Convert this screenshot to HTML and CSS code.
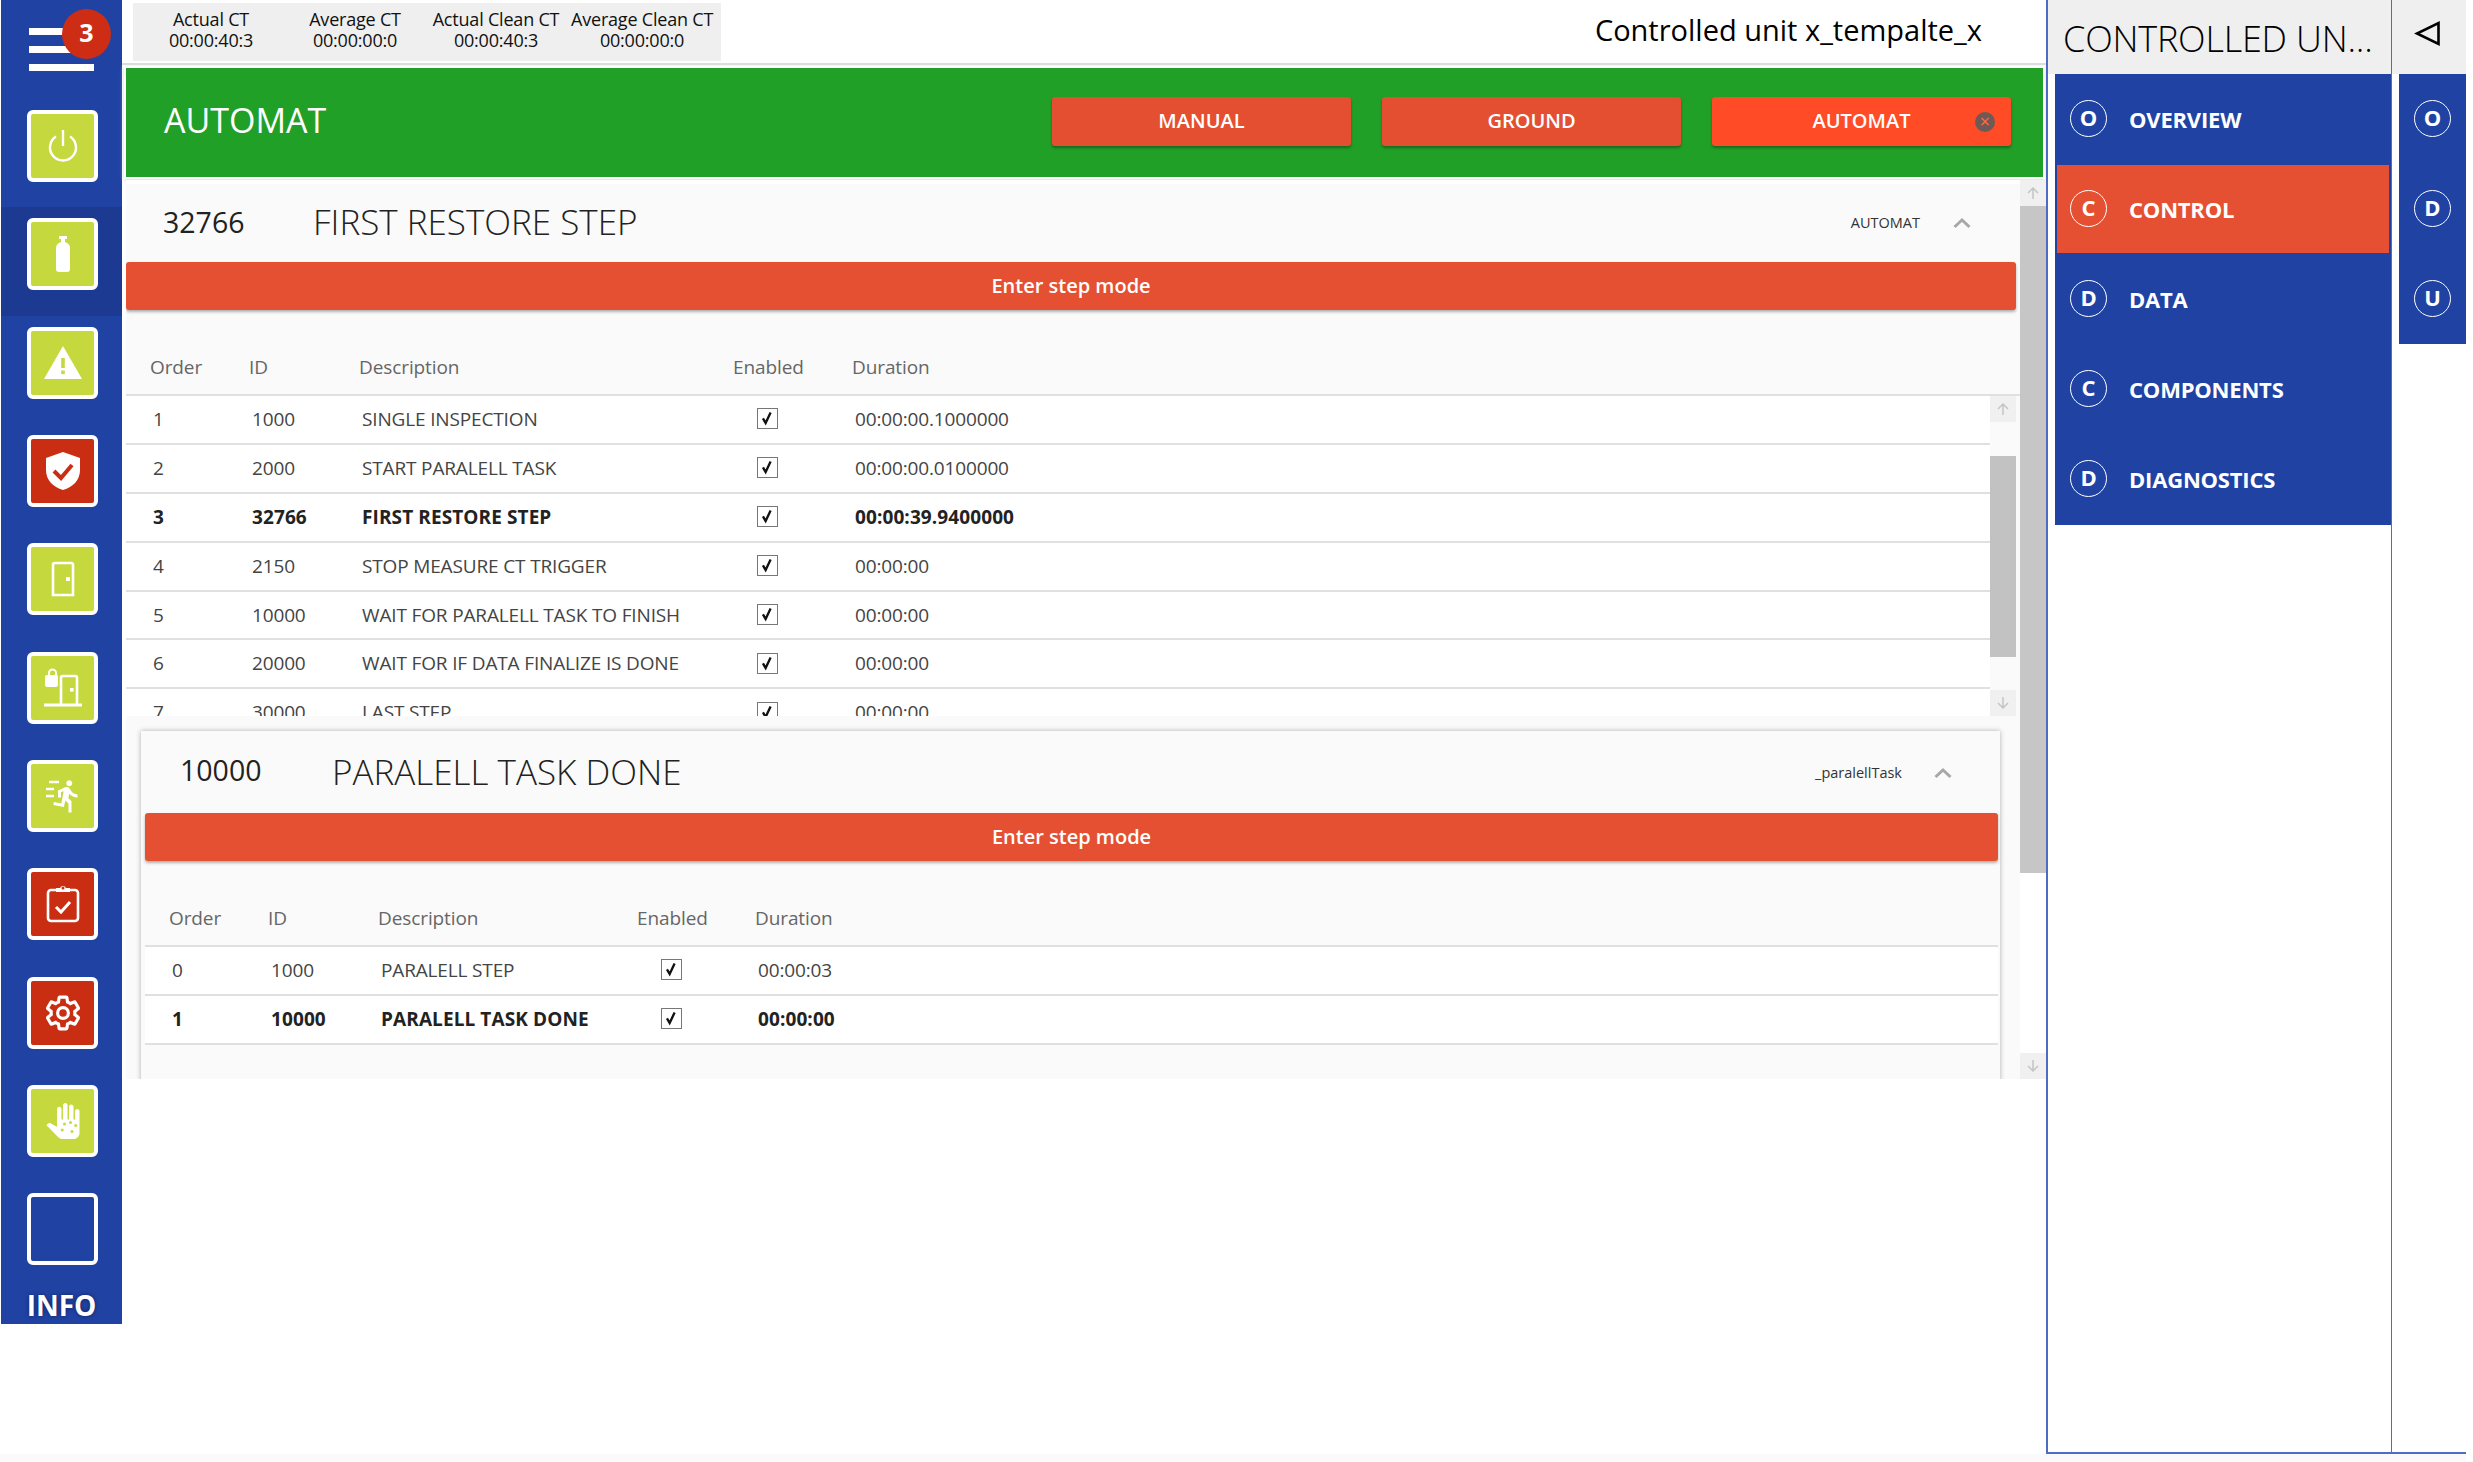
FILE: index.html
```html
<!DOCTYPE html>
<html>
	<head>
		<title>Controlled unit</title>
		<link rel="stylesheet" href="styles.css">
	</head>
	<body>
		<svg class="defs" width="0" height="0">
			<symbol id="check" viewBox="0 0 20 20"><path d="M5.5 10.5 L8.5 15.5 L14 4" fill="none" stroke="#111" stroke-width="2.6"/></symbol>
			<symbol id="chev" viewBox="0 0 18 12"><path d="M1.5 10 L9 3 L16.5 10" fill="none" stroke="#a8a8a8" stroke-width="3"/></symbol>
			<symbol id="up" viewBox="0 0 14 14"><path d="M7 13 V2 M2 7 L7 2 L12 7" fill="none" stroke="#c4c4c4" stroke-width="1.5"/></symbol>
			<symbol id="down" viewBox="0 0 14 14"><path d="M7 1 V12 M2 7 L7 12 L12 7" fill="none" stroke="#c4c4c4" stroke-width="1.5"/></symbol>
		</svg>
		<div class="page">
			<div class="side">
				<div class="side-top">
					<div class="burger"><i></i><i></i><i></i></div>
					<div class="badge">3</div>
				</div>
				<div class="side-row">
					<div class="tile lime">
						<svg viewBox="0 0 40 40" width="40" height="40"><path d="M13 10.5 A13 13 0 1 0 27 10.5" fill="none" stroke="#fff" stroke-width="2.4"/><path d="M20 4 V20" stroke="#fff" stroke-width="2.4"/></svg>
					</div>
				</div>
				<div class="side-row active">
					<div class="tile lime">
						<svg viewBox="0 0 40 40" width="40" height="40"><path d="M16 2 H24 V5 H22 V8 C25 9 27 11 27 14 V35 C27 37 26 38 24 38 H16 C14 38 13 37 13 35 V14 C13 11 15 9 18 8 V5 H16 Z" fill="#fff"/></svg>
					</div>
				</div>
				<div class="side-row">
					<div class="tile lime">
						<svg viewBox="0 0 40 40" width="40" height="40"><path d="M20 3 L39 36 H1 Z" fill="#fff"/><rect x="18.2" y="15" width="3.6" height="10" fill="#c5d93f"/><rect x="18.2" y="27.5" width="3.6" height="3.6" fill="#c5d93f"/></svg>
					</div>
				</div>
				<div class="side-row">
					<div class="tile red">
						<svg viewBox="0 0 40 40" width="40" height="40"><path d="M20 1 L37 7 V19 C37 29 30 36 20 39 C10 36 3 29 3 19 V7 Z" fill="#fff"/><path d="M11 20 L18 27 L29 14" fill="none" stroke="#ca2e12" stroke-width="4"/></svg>
					</div>
				</div>
				<div class="side-row">
					<div class="tile lime">
						<svg viewBox="0 0 40 40" width="40" height="40"><path d="M10 36 V6 Q10 4 12 4 H28 Q30 4 30 6 V36 Z" fill="none" stroke="#fff" stroke-width="2.6"/><rect x="23" y="18" width="4" height="4" fill="#fff"/></svg>
					</div>
				</div>
				<div class="side-row">
					<div class="tile lime">
						<svg viewBox="0 0 40 40" width="40" height="40"><path d="M1 37 H39" stroke="#fff" stroke-width="3"/><path d="M18 36 V10 Q18 8 20 8 H32 Q34 8 34 10 V36" fill="none" stroke="#fff" stroke-width="2.6"/><rect x="27" y="20" width="3.6" height="3.6" fill="#fff"/><path d="M2 9 Q2 7 4 7 H5 V5 A4.5 4.5 0 0 1 14 5 V7 H15 Q14 7 14 7 Q15 7 15 9 V17 Q15 19 13 19 H4 Q2 19 2 17 Z" fill="#fff"/><path d="M7 7 V5 A2.5 2.5 0 0 1 12 5 V7 Z" fill="#c5d93f"/></svg>
					</div>
				</div>
				<div class="side-row">
					<div class="tile lime">
						<svg viewBox="0 0 40 40" width="40" height="40">
							<g transform="translate(6 2) scale(1.5)"><path d="M13.49 5.48c1.1 0 2-.9 2-2s-.9-2-2-2-2 .9-2 2 .9 2 2 2zm-3.6 13.9l1-4.4 2.1 2v6h2v-7.5l-2.1-2 .6-3c1.3 1.5 3.3 2.5 5.5 2.5v-2c-1.9 0-3.5-1-4.3-2.4l-1-1.6c-.4-.6-1-1-1.7-1-.3 0-.5.1-.8.1l-5.2 2.2v4.7h2v-3.4l1.8-.7-1.6 8.1-4.9-1-.4 2 7 1.4z" fill="#fff"/></g>
							<path d="M6 6 H16 M3 13 H11 M3 20 H11" stroke="#fff" stroke-width="2.4"/>
						</svg>
					</div>
				</div>
				<div class="side-row">
					<div class="tile red">
						<svg viewBox="0 0 40 40" width="40" height="40"><rect x="5" y="6" width="30" height="31" rx="3" fill="none" stroke="#fff" stroke-width="2.6"/><path d="M13 8 V4 H17 A3.2 3.2 0 0 1 23 4 H27 V8 Z" fill="#fff"/><circle cx="20" cy="4" r="1.5" fill="#ca2e12"/><path d="M13 23 L18 28 L27 18" fill="none" stroke="#fff" stroke-width="3"/></svg>
					</div>
				</div>
				<div class="side-row">
					<div class="tile red">
						<svg viewBox="0 0 24 24" width="38" height="38"><path d="M19.43 12.98c.04-.32.07-.64.07-.98s-.03-.66-.07-.98l2.11-1.65c.19-.15.24-.42.12-.64l-2-3.46c-.12-.22-.39-.3-.61-.22l-2.49 1c-.52-.4-1.08-.73-1.69-.98l-.38-2.65C14.46 2.18 14.25 2 14 2h-4c-.25 0-.46.18-.49.42l-.38 2.65c-.61.25-1.17.59-1.69.98l-2.49-1c-.23-.09-.49 0-.61.22l-2 3.46c-.13.22-.07.49.12.64l2.11 1.65c-.04.32-.07.65-.07.98s.03.66.07.98l-2.11 1.65c-.19.15-.24.42-.12.64l2 3.46c.12.22.39.3.61.22l2.49-1c.52.4 1.08.73 1.69.98l.38 2.65c.03.24.24.42.49.42h4c.25 0 .46-.18.49-.42l.38-2.65c.61-.25 1.17-.59 1.69-.98l2.49 1c.23.09.49 0 .61-.22l2-3.46c.12-.22.07-.49-.12-.64l-2.11-1.65z" fill="none" stroke="#fff" stroke-width="2"/><circle cx="12" cy="12" r="3.4" fill="none" stroke="#fff" stroke-width="2"/></svg>
					</div>
				</div>
				<div class="side-row">
					<div class="tile lime">
						<svg viewBox="0 0 24 24" width="36" height="36"><path d="M23 5.5V20c0 2.2-1.8 4-4 4h-7.3c-1.08 0-2.1-.43-2.85-1.19L1 14.83s1.26-1.23 1.3-1.25c.22-.19.49-.29.79-.29.22 0 .42.06.6.16.04.01 4.31 2.46 4.31 2.46V4c0-.83.67-1.5 1.5-1.5S11 3.17 11 4v7h1V1.5c0-.83.67-1.5 1.5-1.5S15 .67 15 1.5V11h1V2.5c0-.83.67-1.5 1.5-1.5s1.5.67 1.5 1.5V11h1V5.5c0-.83.67-1.5 1.5-1.5s1.5.67 1.5 1.5z" fill="#fff"/><g fill="#c5d93f"><circle cx="13" cy="14" r="1"/><circle cx="17" cy="13" r="1"/><circle cx="20.5" cy="15" r="1"/><circle cx="11.5" cy="18" r="1"/><circle cx="18" cy="19" r="1"/></g></svg>
					</div>
				</div>
				<div class="side-row">
					<div class="tile"></div>
				</div>
				<div class="side-info">INFO</div>
			</div>

			<div class="main">
				<div class="head">
					<div class="stats">
						<div class="stat"><div>Actual CT</div><div>00:00:40:3</div></div>
						<div class="stat"><div>Average CT</div><div>00:00:00:0</div></div>
						<div class="stat"><div>Actual Clean CT</div><div>00:00:40:3</div></div>
						<div class="stat"><div>Average Clean CT</div><div>00:00:00:0</div></div>
					</div>
					<div class="unit">Controlled unit x_tempalte_x</div>
				</div>

				<div class="mode">
					<div class="mode-name">AUTOMAT</div>
					<div class="mode-btns">
						<div class="btn">MANUAL</div>
						<div class="btn">GROUND</div>
						<div class="btn on">AUTOMAT<span class="close">×</span></div>
					</div>
				</div>

				<div class="scroll">
					<div class="content">
						<div class="card-head">
							<div class="num">32766</div>
							<div class="title">FIRST RESTORE STEP</div>
							<div class="tag">AUTOMAT</div>
							<svg class="chev"><use href="#chev"/></svg>
						</div>
						<div class="step-btn">Enter step mode</div>
						<div class="grid-head outer">
							<div>Order</div><div>ID</div><div>Description</div><div>Enabled</div><div>Duration</div>
						</div>
						<div class="rows-wrap">
							<div class="rows">
								<div class="row outer"><div>1</div><div>1000</div><div>SINGLE INSPECTION</div><div><span class="cb"><svg><use href="#check"/></svg></span></div><div>00:00:00.1000000</div></div>
								<div class="row outer"><div>2</div><div>2000</div><div>START PARALELL TASK</div><div><span class="cb"><svg><use href="#check"/></svg></span></div><div>00:00:00.0100000</div></div>
								<div class="row outer cur"><div>3</div><div>32766</div><div>FIRST RESTORE STEP</div><div><span class="cb"><svg><use href="#check"/></svg></span></div><div>00:00:39.9400000</div></div>
								<div class="row outer"><div>4</div><div>2150</div><div>STOP MEASURE CT TRIGGER</div><div><span class="cb"><svg><use href="#check"/></svg></span></div><div>00:00:00</div></div>
								<div class="row outer"><div>5</div><div>10000</div><div>WAIT FOR PARALELL TASK TO FINISH</div><div><span class="cb"><svg><use href="#check"/></svg></span></div><div>00:00:00</div></div>
								<div class="row outer"><div>6</div><div>20000</div><div>WAIT FOR IF DATA FINALIZE IS DONE</div><div><span class="cb"><svg><use href="#check"/></svg></span></div><div>00:00:00</div></div>
								<div class="row outer"><div>7</div><div>30000</div><div>LAST STEP</div><div><span class="cb"><svg><use href="#check"/></svg></span></div><div>00:00:00</div></div>
							</div>
							<div class="bar small">
								<div class="arrow"><svg><use href="#up"/></svg></div>
								<div class="thumb"></div>
								<div class="arrow"><svg><use href="#down"/></svg></div>
							</div>
						</div>

						<div class="sub">
							<div class="card-head">
								<div class="num">10000</div>
								<div class="title">PARALELL TASK DONE</div>
								<div class="tag">_paralellTask</div>
								<svg class="chev"><use href="#chev"/></svg>
							</div>
							<div class="step-btn">Enter step mode</div>
							<div class="grid-head inner">
								<div>Order</div><div>ID</div><div>Description</div><div>Enabled</div><div>Duration</div>
							</div>
							<div class="row inner"><div>0</div><div>1000</div><div>PARALELL STEP</div><div><span class="cb"><svg><use href="#check"/></svg></span></div><div>00:00:03</div></div>
							<div class="row inner cur"><div>1</div><div>10000</div><div>PARALELL TASK DONE</div><div><span class="cb"><svg><use href="#check"/></svg></span></div><div>00:00:00</div></div>
						</div>
					</div>
					<div class="bar big">
						<div class="arrow"><svg><use href="#up"/></svg></div>
						<div class="thumb"></div>
						<div class="arrow"><svg><use href="#down"/></svg></div>
					</div>
				</div>
			</div>

			<div class="panel">
				<div class="panel-title">CONTROLLED UN...</div>
				<div class="nav">
					<div class="nav-item"><span class="ring">O</span>OVERVIEW</div>
					<div class="nav-item on"><span class="ring">C</span>CONTROL</div>
					<div class="nav-item"><span class="ring">D</span>DATA</div>
					<div class="nav-item"><span class="ring">C</span>COMPONENTS</div>
					<div class="nav-item"><span class="ring">D</span>DIAGNOSTICS</div>
				</div>
			</div>
			<div class="mini">
				<div class="mini-top">
					<svg viewBox="0 0 28 28" width="28" height="28"><path d="M24.5 3 V24 L3 13.5 Z" fill="none" stroke="#000" stroke-width="2.6"/></svg>
				</div>
				<div class="mini-nav">
					<div class="mini-item"><span class="ring">O</span></div>
					<div class="mini-item"><span class="ring">D</span></div>
					<div class="mini-item"><span class="ring">U</span></div>
				</div>
			</div>
		</div>
		<div class="strip"></div>
	</body>
</html>
```

FILE: styles.css
```css
*{
	margin:0px;
	padding:0px;
	box-sizing:border-box;
}
html,body{
	overflow:hidden;
}
body{
	height:1462px;
	background-color:#ffffff;
	font-family:"Open Sans","Noto Sans",sans-serif;
	color:#333333;
}
.defs{
	position:absolute;
}
.page{
	display:flex;
	width:2466px;
	height:1454px;
}
.strip{
	width:2466px;
	height:8px;
	background-color:#fafafa;
}

/* left bar */
.side{
	flex:none;
	width:121px;
	height:1324px;
	margin-left:1px;
	background-color:#2043a3;
}
.side-top{
	position:relative;
	height:99px;
}
.burger{
	display:flex;
	flex-direction:column;
	gap:11px;
	width:65px;
	margin-left:28px;
	padding-top:28px;
}
.burger i{
	display:block;
	height:7px;
	background-color:#ffffff;
}
.badge{
	position:absolute;
	left:61px;
	top:9px;
	width:49px;
	height:50px;
	border-radius:50%;
	background-color:#cc2d14;
	color:#ffffff;
	font-size:25px;
	font-weight:700;
	line-height:46px;
	text-align:center;
}
.side-row{
	height:108.33px;
	padding-top:11px;
	padding-left:26px;
}
.side-row.active{
	background-color:#1d3a93;
}
.tile{
	display:flex;
	align-items:center;
	justify-content:center;
	width:71px;
	height:72px;
	border:4px solid #ffffff;
	border-radius:6px;
}
.tile.lime{
	background-color:#c5d93f;
}
.tile.red{
	background-color:#ca2e12;
}
.side-info{
	margin-top:-6px;
	color:#ffffff;
	font-size:28px;
	font-weight:700;
	line-height:40px;
	text-align:center;
	text-shadow:0 0 4px #10205a;
}

/* middle */
.main{
	flex:none;
	width:1924px;
}
.head{
	display:flex;
	justify-content:space-between;
	height:65px;
	padding-left:11px;
	border-bottom:2px solid #dddddd;
}
.stats{
	display:grid;
	grid-template-columns:156px 132px 150px 142px;
	width:588px;
	height:58px;
	margin-top:3px;
	padding-top:6px;
	background-color:#efefef;
	color:#111111;
	font-size:18px;
	letter-spacing:-.2px;
	line-height:21px;
	text-align:center;
	white-space:nowrap;
}
.unit{
	margin-right:64px;
	padding-top:8px;
	color:#000000;
	font-size:29px;
	line-height:44px;
}
.mode{
	display:flex;
	align-items:center;
	justify-content:space-between;
	width:1917px;
	height:109px;
	margin:3px 0px 3px 4px;
	padding:0px 32px 2px 38px;
	background-color:#21a027;
	box-shadow:0 0 0 2px #ffffff,0 1px 4px 2px #d8d8d8;
}
.mode-name{
	margin-bottom:3px;
	color:#ffffff;
	font-size:34px;
}
.mode-btns{
	display:flex;
	gap:31px;
}
.btn{
	position:relative;
	width:299px;
	height:49px;
	border-radius:3px;
	background-color:#e44f32;
	box-shadow:0 2px 3px rgba(0,0,0,.35);
	color:#ffffff;
	font-size:20px;
	font-weight:600;
	line-height:48px;
	text-align:center;
}
.btn.on{
	background-color:#ff4b26;
}
.close{
	position:absolute;
	left:263px;
	top:15px;
	width:20px;
	height:20px;
	border-radius:50%;
	background-color:#6e5a55;
	color:#ff6a4a;
	font-size:18px;
	font-weight:400;
	line-height:19px;
}

/* scroll area */
.scroll{
	display:flex;
	width:1924px;
	height:899px;
	padding-left:4px;
}
.content{
	flex:none;
	width:1894px;
	height:899px;
	overflow:hidden;
	border-top:4px solid #ffffff;
	background-color:#fafafa;
}
.card-head{
	display:flex;
	align-items:center;
	height:78px;
	padding-left:37px;
	padding-bottom:3px;
}
.num{
	width:150px;
	color:#222222;
	font-size:28.5px;
	font-weight:500;
}
.title{
	flex:1;
	color:#222222;
	font-size:35px;
	font-weight:300;
}
.tag{
	margin-top:1px;
	color:#333333;
	font-size:14.5px;
}
.chev{
	width:18px;
	height:12px;
	margin:3px 49px 0px 33px;
}
.step-btn{
	width:1890px;
	height:48px;
	border-radius:3px;
	background-color:#e55032;
	box-shadow:0 2px 3px rgba(0,0,0,.3);
	color:#ffffff;
	font-size:20px;
	font-weight:600;
	line-height:48px;
	text-align:center;
}
.grid-head,.row{
	display:grid;
	align-items:center;
	padding-left:24px;
}
.outer{
	grid-template-columns:99px 110px 374px 119px 1fr;
}
.inner{
	grid-template-columns:99px 110px 259px 118px 1fr;
}
.grid-head{
	height:86px;
	padding-top:29px;
	border-bottom:2px solid #e0e0e0;
	color:#666666;
	font-size:19px;
	letter-spacing:-.1px;
}
.rows-wrap{
	display:flex;
	width:1890px;
	height:320px;
	overflow:hidden;
}
.rows{
	flex:none;
	width:1864px;
}
.row{
	height:48.9px;
	padding-bottom:1px;
	border-bottom:2px solid #e0e0e0;
	background-color:#ffffff;
	color:#444444;
	font-size:19px;
	letter-spacing:-.15px;
}
.row > div{
	padding-left:3px;
}
.row > div:nth-child(4){
	padding-left:24px;
}
.row.cur{
	color:#222222;
	font-weight:700;
	letter-spacing:.1px;
}
.cb{
	display:block;
	width:21px;
	height:21px;
	border:1.5px solid #777777;
	background-color:#ffffff;
}
.cb svg{
	display:block;
	width:18px;
	height:18px;
}
.sub{
	width:1859px;
	height:400px;
	margin:15px 0px 0px 15px;
	background-color:#fafafa;
	box-shadow:0 0 5px rgba(0,0,0,.3);
}
.sub .card-head{
	height:82px;
	padding-left:39px;
	padding-bottom:2px;
}
.sub .num{
	width:152px;
	padding-bottom:3px;
}
.sub .tag{
	margin-top:3px;
}
.sub .chev{
	margin:3px 48px 0px 32px;
}
.sub .step-btn{
	width:1853px;
	margin-left:4px;
}
.sub .grid-head,.sub .row{
	width:1853px;
	margin-left:4px;
}
.sub .grid-head{
	height:86px;
}
.bar{
	display:flex;
	flex-direction:column;
	flex:none;
	width:26px;
}
.bar .arrow{
	display:flex;
	align-items:center;
	justify-content:center;
	flex:none;
	height:26px;
	background-color:#f0f0f0;
}
.arrow svg{
	width:14px;
	height:14px;
}
.bar.small{
	height:320px;
	background-color:#fafafa;
}
.bar.small .thumb{
	height:201px;
	margin:34px 0px 33px 0px;
	background-color:#c2c2c2;
}
.bar.big{
	height:899px;
}
.bar.big .thumb{
	height:667px;
	margin-bottom:180px;
	background-color:#c6c6c6;
}

/* right panels */
.panel{
	flex:none;
	width:346px;
	height:1454px;
	border-left:2px solid #4f6cc4;
	border-right:1px solid #4f6cc4;
	border-bottom:2px solid #4f6cc4;
}
.panel-title{
	height:74px;
	padding-left:15px;
	background-color:#efefef;
	color:#000000;
	font-size:36px;
	font-weight:300;
	letter-spacing:-.2px;
	line-height:77px;
	white-space:nowrap;
}
.nav{
	height:451px;
	margin-left:7px;
	background-color:#2043a3;
}
.nav-item{
	display:flex;
	align-items:center;
	height:90px;
	padding-left:15px;
	padding-bottom:1px;
	color:#ffffff;
	font-size:22px;
	font-weight:700;
	letter-spacing:-.2px;
}
.nav-item.on{
	height:88px;
	margin:1px 2px;
	padding-left:13px;
	background-color:#e55032;
}
.ring{
	display:block;
	flex:none;
	width:37px;
	height:37px;
	margin-right:22px;
	border:1.5px solid #ffffff;
	border-radius:50%;
	color:#ffffff;
	font-size:22px;
	font-weight:700;
	line-height:32px;
	text-align:center;
}
.mini{
	flex:none;
	width:74px;
	height:1454px;
	border-bottom:2px solid #4f6cc4;
}
.mini-top{
	display:flex;
	align-items:center;
	height:74px;
	padding:0px 0px 6px 22px;
	background-color:#efefef;
}
.mini-nav{
	height:270px;
	margin-left:7px;
	background-color:#2043a3;
}
.mini-item{
	display:flex;
	align-items:center;
	justify-content:center;
	height:90px;
	padding-bottom:1px;
}
.mini-item .ring{
	margin-right:0px;
}
```
